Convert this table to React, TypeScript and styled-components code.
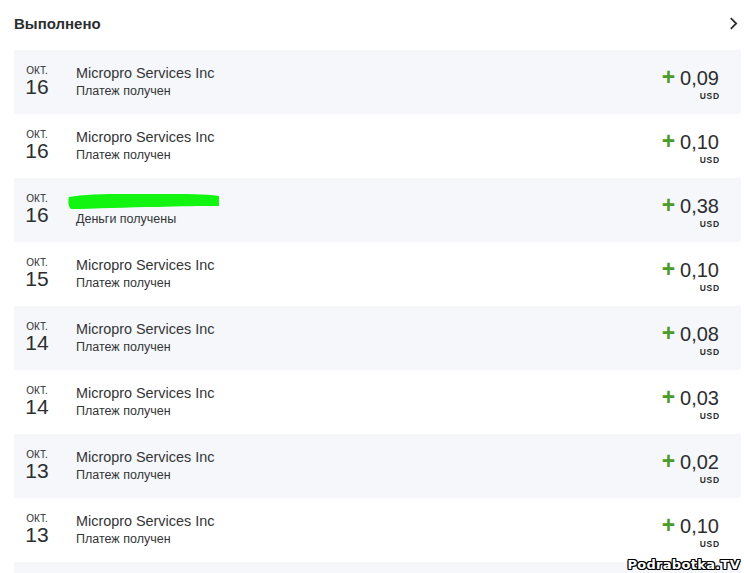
import React from 'react';
import styled, { createGlobalStyle } from 'styled-components';

interface Transaction {
  month: string;
  day: string;
  name?: string;
  status: string;
  amount: string;
  hidden?: boolean;
}

const transactions: Transaction[] = [
  { month: 'окт.', day: '16', name: 'Micropro Services Inc', status: 'Платеж получен', amount: '0,09' },
  { month: 'окт.', day: '16', name: 'Micropro Services Inc', status: 'Платеж получен', amount: '0,10' },
  { month: 'окт.', day: '16', status: 'Деньги получены', amount: '0,38', hidden: true },
  { month: 'окт.', day: '15', name: 'Micropro Services Inc', status: 'Платеж получен', amount: '0,10' },
  { month: 'окт.', day: '14', name: 'Micropro Services Inc', status: 'Платеж получен', amount: '0,08' },
  { month: 'окт.', day: '14', name: 'Micropro Services Inc', status: 'Платеж получен', amount: '0,03' },
  { month: 'окт.', day: '13', name: 'Micropro Services Inc', status: 'Платеж получен', amount: '0,02' },
  { month: 'окт.', day: '13', name: 'Micropro Services Inc', status: 'Платеж получен', amount: '0,10' },
];

const App = () => (
  <>
    <GlobalStyle />
    <SPage>
      <SHeader>
        <STitle>Выполнено</STitle>
        <SChevron viewBox="0 0 10 16" aria-hidden>
          <path d="M2 2l6 6-6 6" fill="none" stroke="#2c2e2f" strokeWidth="2" />
        </SChevron>
      </SHeader>

      <SList>
        {transactions.map((tx, i) => (
          <SRow key={i} $striped={i % 2 === 0}>
            <SDate>
              <SMonth>{tx.month}</SMonth>
              <SDay>{tx.day}</SDay>
            </SDate>
            <SDetails>
              {tx.hidden ? (
                <SScribble viewBox="0 0 152 18" aria-hidden>
                  <path
                    d="M1 5 C20 1 60 2 92 2 C118 2 138 2 151 4 L151 14 C132 14 110 14 90 15 C60 15 25 17 3 17 C0 15 0 8 1 5 Z"
                    fill="#11f511"
                  />
                </SScribble>
              ) : (
                <SName>{tx.name}</SName>
              )}
              <SStatus>{tx.status}</SStatus>
            </SDetails>
            <SAmount>
              <SValue>
                <SPlus>+</SPlus>
                {tx.amount}
              </SValue>
              <SCurrency>USD</SCurrency>
            </SAmount>
          </SRow>
        ))}
        <SRow $striped />
      </SList>

      <SWatermark>Podrabotka.TV</SWatermark>
    </SPage>
  </>
);

const GlobalStyle = createGlobalStyle`
  html, body {
    margin: 0;
    padding: 0;
    background: #ffffff;
    overflow: hidden;
  }

  body {
    font-family: 'Liberation Sans', Arial, sans-serif;
    color: #2c2e2f;
  }
`;

const SPage = styled.div`
  position: relative;
  width: 744px;
  height: 573px;
  overflow: hidden;
  padding: 0 3px 0 14px;
  box-sizing: border-box;
`;

const SHeader = styled.div`
  display: flex;
  align-items: center;
  justify-content: space-between;
  height: 47px;
  padding-right: 3px;
`;

const STitle = styled.h2`
  margin: 0;
  font-size: 15px;
  font-weight: 700;
  color: #2c2e2f;
`;

const SChevron = styled.svg`
  width: 9px;
  height: 15px;
`;

const SList = styled.div`
  display: flex;
  flex-direction: column;
  margin-top: 3px;
`;

const SRow = styled.div<{ $striped: boolean }>`
  display: flex;
  align-items: center;
  height: 64px;
  flex-shrink: 0;
  padding-right: 22px;
  background: ${({ $striped }) => ($striped ? '#f5f7fa' : '#ffffff')};
`;

const SDate = styled.div`
  display: flex;
  flex-direction: column;
  align-items: center;
  width: 46px;
  margin-top: -2px;
`;

const SMonth = styled.span`
  font-size: 10px;
  line-height: 11px;
  text-transform: uppercase;
  color: #2c2e2f;
`;

const SDay = styled.span`
  font-size: 21px;
  line-height: 21px;
  color: #2c2e2f;
`;

const SDetails = styled.div`
  flex: 1;
  display: flex;
  flex-direction: column;
  margin-left: 16px;
`;

const SName = styled.span`
  font-size: 14.4px;
  line-height: 18px;
  color: #333536;
`;

const SScribble = styled.svg`
  width: 152px;
  height: 18px;
  margin-left: -8px;
`;

const SStatus = styled.span`
  font-size: 12.5px;
  line-height: 18px;
  color: #333536;
`;

const SAmount = styled.div`
  display: flex;
  flex-direction: column;
  align-items: flex-end;
  margin-top: 3px;
`;

const SValue = styled.span`
  display: flex;
  align-items: baseline;
  font-size: 20px;
  line-height: 20px;
  color: #2c2e2f;
`;

const SPlus = styled.span`
  font-size: 23px;
  font-weight: 700;
  color: #4c9a2a;
  margin-right: 5px;
`;

const SCurrency = styled.span`
  font-size: 8.5px;
  font-weight: 700;
  letter-spacing: 0.8px;
  line-height: 10px;
  margin-top: 3px;
  margin-right: -1px;
  color: #2c2e2f;
`;

const SWatermark = styled.span`
  position: absolute;
  right: 4px;
  bottom: 1px;
  font-family: 'DejaVu Sans', sans-serif;
  font-size: 13px;
  font-weight: 700;
  line-height: 15px;
  color: #ffffff;
  letter-spacing: 0.3px;
  text-shadow:
    -1px -1px 0 #000, 1px -1px 0 #000, -1px 1px 0 #000, 1px 1px 0 #000,
    0 -1px 0 #000, 0 1px 0 #000, -1px 0 0 #000, 1px 0 0 #000;
`;

export default App;
